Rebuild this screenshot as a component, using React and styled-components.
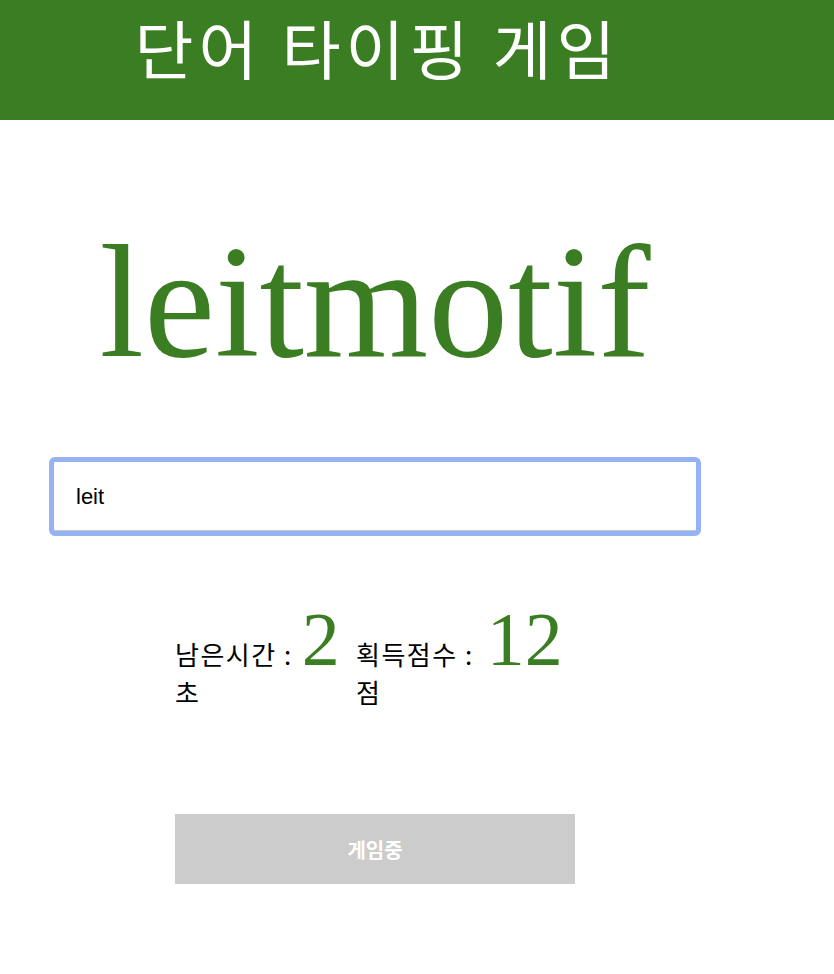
import React from "react";
import styled, { createGlobalStyle } from "styled-components";

const GREEN = "#3a7d22";

const Global = createGlobalStyle`
  html, body { margin: 0; padding: 0; background: #ffffff; }
  body { font-family: "Liberation Serif", "Noto Sans CJK KR", serif; }
`;

const Header = styled.header`
  width: 100%;
  height: 120px;
  background: ${GREEN};
`;

const Title = styled.h1`
  width: 750px;
  margin: 0;
  padding-left: 5px;
  box-sizing: border-box;
  text-align: center;
  color: #ffffff;
  font-family: "Noto Sans CJK KR", sans-serif;
  font-weight: 400;
  font-size: 64px;
  letter-spacing: 5px;
  line-height: 93px;
`;

const Main = styled.main`
  width: 750px;
  display: flex;
  flex-direction: column;
  align-items: center;
`;

const Word = styled.div`
  margin-top: 90px;
  color: ${GREEN};
  font-family: "Liberation Serif", "Times New Roman", serif;
  font-size: 160px;
  line-height: normal;
`;

const Input = styled.input`
  box-sizing: border-box;
  margin-top: 62px;
  width: 652px;
  height: 79px;
  padding: 0 0 0 22px;
  border: 5px solid #95b3f4;
  border-radius: 6px;
  box-shadow: inset 0 -1px 0 #c4c4c4;
  outline: none;
  background: #ffffff;
  color: #000000;
  font-family: "Liberation Sans", Arial, sans-serif;
  font-size: 22px;
`;

const Stats = styled.div`
  margin-top: 65px;
  width: 400px;
  display: flex;
`;

const StatItem = styled.div`
  width: ${(p) => p.$width};
  flex: none;
  display: flex;
  flex-direction: column;
`;

const StatLine = styled.div`
  display: flex;
  align-items: baseline;
  gap: ${(p) => p.$gap};
`;

const Label = styled.span`
  font-family: "Noto Sans CJK KR", sans-serif;
  font-size: 26px;
  letter-spacing: 1.5px;
  line-height: 31px;
  color: #000000;
`;

const Value = styled.span`
  font-family: "Liberation Serif", "Times New Roman", serif;
  font-size: 76px;
  line-height: 1;
  color: ${GREEN};
`;

const Unit = styled.span`
  font-family: "Noto Sans CJK KR", sans-serif;
  font-size: 26px;
  line-height: 30px;
  color: #000000;
`;

const Button = styled.button`
  margin-top: 107px;
  width: 400px;
  height: 70px;
  border: none;
  background: #cccccc;
  color: #ffffff;
  font-family: "Noto Sans CJK KR", sans-serif;
  font-size: 20px;
  font-weight: 700;
  cursor: default;
`;

export default function App() {
  return (
    <>
      <Global />
      <Header>
        <Title>단어 타이핑 게임</Title>
      </Header>
      <Main>
        <Word>leitmotif</Word>
        <Input type="text" defaultValue="leit" readOnly />
        <Stats>
          <StatItem $width="181px">
            <StatLine $gap="9px">
              <Label>남은시간 :</Label>
              <Value>2</Value>
            </StatLine>
            <Unit>초</Unit>
          </StatItem>
          <StatItem $width="219px">
            <StatLine $gap="13px">
              <Label>획득점수 :</Label>
              <Value>12</Value>
            </StatLine>
            <Unit>점</Unit>
          </StatItem>
        </Stats>
        <Button disabled>게임중</Button>
      </Main>
    </>
  );
}
